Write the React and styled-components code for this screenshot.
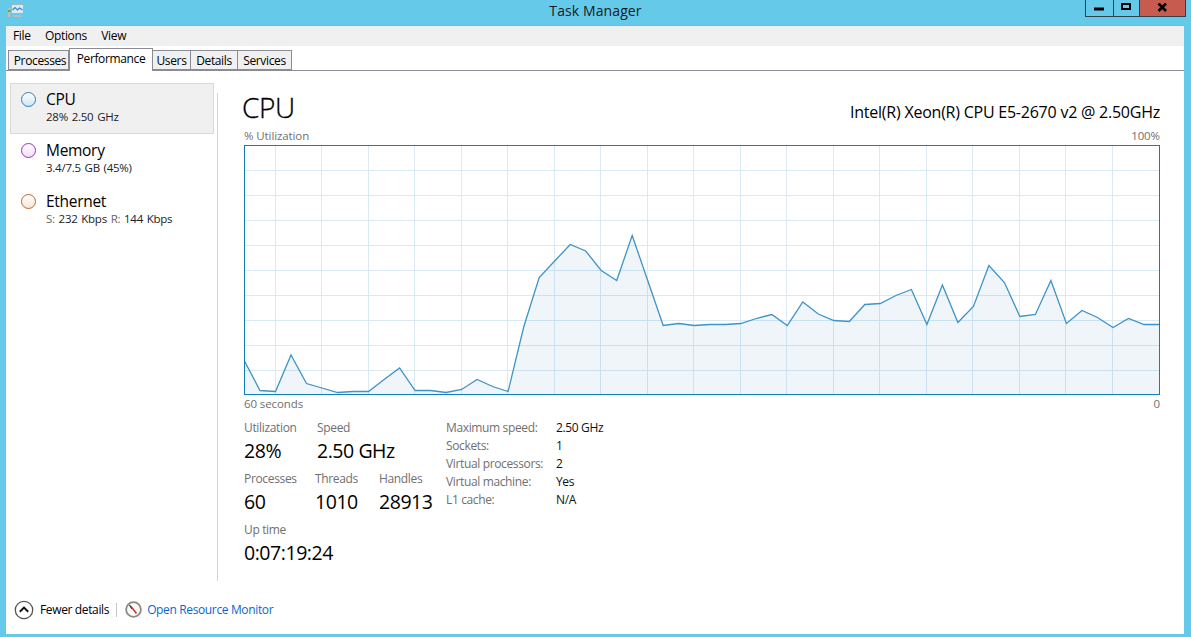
import React from "react";
import styled, { createGlobalStyle } from "styled-components";

const GlobalStyle = createGlobalStyle`
  html, body {
    margin: 0;
    padding: 0;
    background: #65c9ea;
  }
  body {
    font-family: "Open Sans", "Noto Sans", sans-serif;
    font-size: 12px;
    letter-spacing: -0.36px;
    color: #000;
  }
`;

const Frame = styled.div`
  width: 1191px;
  height: 637px;
  background: #65c9ea;
  display: flex;
  flex-direction: column;
  overflow: hidden;
`;

const TitleBar = styled.div`
  height: 25px;
  flex: none;
  display: grid;
  grid-template-columns: 1fr auto 1fr;
`;

const TitleIcon = styled.svg`
  width: 18px;
  height: 16px;
  margin: 2px 0 0 7px;
`;

const Title = styled.div`
  font-size: 14px;
  line-height: 22px;
  color: #1a1a1a;
  letter-spacing: 0.1px;
`;

const Controls = styled.div`
  justify-self: end;
  margin-right: 5px;
  height: 16px;
  display: flex;
  border: 1px solid #2f3f4c;
  border-top: none;
`;

const ControlButton = styled.div`
  box-sizing: border-box;
  width: ${(p) => p.$w}px;
  display: flex;
  align-items: center;
  justify-content: center;
  background: ${(p) => (p.$close ? "#c75b50" : "transparent")};
  border-left: ${(p) => (p.$first ? "none" : "1px solid #2f3f4c")};
`;

const WindowBody = styled.div`
  margin: 0 7px 0 6px;
  height: 608px;
  flex: none;
  background: #fff;
  border-top: 1px solid #7fb6cc;
  display: flex;
  flex-direction: column;
`;

const MenuBar = styled.div`
  height: 20px;
  flex: none;
  background: #f0f0f0;
  display: flex;
  align-items: center;
  padding-left: 7px;
  gap: 14.5px;
`;

const MenuItem = styled.span`
  line-height: 20px;
`;

const TabStrip = styled.div`
  height: 24px;
  flex: none;
  border-bottom: 1px solid #8b8b95;
  display: flex;
  align-items: flex-end;
  padding-left: 2px;
`;

const Tab = styled.div`
  box-sizing: border-box;
  width: ${(p) => p.$w}px;
  height: ${(p) => (p.$active ? 23 : 20)}px;
  margin-bottom: ${(p) => (p.$active ? -1 : 0)}px;
  padding-bottom: ${(p) => (p.$active ? 3 : 0)}px;
  padding-left: ${(p) => (p.$first ? 3 : 0)}px;
  background: ${(p) => (p.$active ? "#fff" : "#f0f0f0")};
  border: 1px solid #8b8b95;
  border-left: ${(p) => (p.$active || p.$first ? "1px solid #8b8b95" : "none")};
  border-bottom: ${(p) => (p.$active ? "none" : "1px solid #8b8b95")};
  display: flex;
  align-items: center;
  justify-content: center;
`;

const Content = styled.div`
  height: 519px;
  flex: none;
  display: flex;
`;

const Sidebar = styled.div`
  width: 204px;
  margin: 12px 0 0 4px;
  flex: none;
`;

const SideItem = styled.div`
  box-sizing: border-box;
  height: 51px;
  display: flex;
  padding: 6px 0 0 10px;
  background: ${(p) => (p.$selected ? "#f0f0f0" : "transparent")};
  border: 1px solid ${(p) => (p.$selected ? "#dadada" : "transparent")};
`;

const Ring = styled.span`
  box-sizing: border-box;
  width: 15px;
  height: 15px;
  margin-top: 2px;
  border-radius: 50%;
  border: 1.5px solid ${(p) => p.$color};
  background: linear-gradient(to bottom, #fff, ${(p) => p.$tint});
  flex: none;
`;

const SideText = styled.div`
  margin-left: 10px;
`;

const SideName = styled.div`
  font-size: 15.5px;
  line-height: 18px;
  letter-spacing: -0.3px;
`;

const SideSub = styled.div`
  font-size: 11.5px;
  line-height: 16px;
  margin-top: 1px;
  color: #222;
  letter-spacing: -0.25px;
  word-spacing: 1px;
`;

const Muted = styled.span`
  color: #666;
`;

const Divider = styled.div`
  width: 1px;
  height: 488px;
  margin: 22px 0 0 3px;
  flex: none;
  background: #d4d4d4;
`;

const Main = styled.div`
  width: 916px;
  margin-left: 26px;
  flex: none;
`;

const Header = styled.div`
  height: 54px;
  display: flex;
  justify-content: space-between;
  align-items: flex-start;
`;

const Heading = styled.div`
  font-size: 28px;
  font-weight: 300;
  line-height: 36px;
  margin: 18px 0 0 -2px;
  color: #000;
  -webkit-text-stroke: 0.3px #000;
`;

const Model = styled.div`
  font-size: 16px;
  line-height: 20px;
  margin-top: 31px;
  letter-spacing: -0.23px;
`;

const AxisRow = styled.div`
  height: ${(p) => p.$h}px;
  display: flex;
  justify-content: space-between;
  align-items: center;
  font-size: 11.5px;
  letter-spacing: -0.1px;
  color: #707070;
`;

const Chart = styled.svg`
  display: block;
  width: 916px;
  height: 250px;
`;

const Stats = styled.div`
  display: flex;
  margin-top: 8px;
`;

const StatsLeft = styled.div`
  width: 202px;
  flex: none;
`;

const StatRow = styled.div`
  height: 51px;
  display: flex;
`;

const Stat = styled.div`
  width: ${(p) => p.$w}px;
  flex: none;
`;

const StatLabel = styled.div`
  font-size: 12px;
  line-height: 18px;
  letter-spacing: -0.34px;
  color: #707070;
`;

const StatValue = styled.div`
  font-size: 19.5px;
  line-height: 27px;
  letter-spacing: -0.45px;
`;

const Specs = styled.div`
  display: grid;
  grid-template-columns: 110px auto;
  grid-auto-rows: 18px;
  align-content: start;
  line-height: 18px;
`;

const SpecKey = styled.div`
  color: #707070;
`;

const SpecValue = styled.div`
  color: #111;
`;

const Footer = styled.div`
  flex: 1;
  display: flex;
  align-items: center;
  padding: 0 0 5px 8px;
`;

const ArrowIcon = styled.svg`
  width: 20px;
  height: 20px;
  flex: none;
`;

const FooterLabel = styled.span`
  margin-left: 6px;
`;

const FooterSep = styled.span`
  width: 1px;
  height: 14px;
  margin: 0 8px 0 7px;
  background: #c8c8c8;
`;

const MonitorIcon = styled.svg`
  width: 17px;
  height: 17px;
  margin-bottom: 1px;
  flex: none;
`;

const FooterLink = styled.a`
  margin-left: 5px;
  color: #0a66d0;
`;

const tabs = [
  { label: "Processes", w: 61 },
  { label: "Performance", w: 84, active: true },
  { label: "Users", w: 38 },
  { label: "Details", w: 47 },
  { label: "Services", w: 54 },
];

const graphY = [
  216, 245.5, 246.5, 210, 238.5, 243, 247.5, 246.5, 246.5, 234.5, 223, 245.5, 245.5, 247.5,
  244.5, 234.5, 241.5, 246.5, 182, 132.5, 116, 99.5, 106, 125.5, 135.5, 90.5, 135.5, 180.5,
  178.5, 180.5, 179.5, 179.5, 178.5, 173.5, 169.5, 180.5, 157, 169, 175.5, 176.5, 159.5,
  158.5, 150.5, 144.5, 179.5, 140, 177.5, 161.5, 120.5, 137.5, 171.5, 169.5, 135.5, 178.5,
  165.5, 172.5, 182.5, 173.5, 179.5, 179.5,
];
const STEP = 915 / 59;
const linePoints = graphY.map((y, i) => `${(0.5 + i * STEP).toFixed(1)},${y}`).join(" ");
const hLines = [25, 50, 75, 100, 125, 150, 175, 200, 225];
const vLines = [31, 77.5, 124, 170.5, 217, 263.5, 310, 356.5, 403, 449.5, 496, 542.5, 589, 635.5, 682, 728.5, 775, 821.5, 868];

function CpuChart() {
  return (
    <Chart viewBox="0 0 916 250">
      {hLines.map((y) => (
        <line key={y} x1="0" x2="916" y1={y + 0.5} y2={y + 0.5} stroke="#d9eaf4" />
      ))}
      {vLines.map((x) => (
        <line key={x} x1={Math.floor(x) + 0.5} x2={Math.floor(x) + 0.5} y1="0" y2="250" stroke="#d9eaf4" />
      ))}
      <polygon points={`0.5,249 ${linePoints} 915.5,249`} fill="#4a86b8" fillOpacity="0.085" />
      <polyline points={linePoints} fill="none" stroke="#3f93c6" strokeWidth="1.3" />
      <rect x="0.5" y="0.5" width="915" height="249" fill="none" stroke="#117dbb" />
    </Chart>
  );
}

function App() {
  return (
    <>
      <GlobalStyle />
      <Frame>
        <TitleBar>
          <TitleIcon viewBox="0 0 18 16">
            <rect x="4.5" y="2.5" width="12" height="9" fill="#d6e9f7" stroke="#a9b2b8" />
            <path d="M5.5 8l2.5-2.5 2.5 2.5 2-2 3 2" fill="none" stroke="#3a86c8" strokeWidth="1.2" />
            <rect x="1" y="6" width="2.5" height="9" fill="#b8c0b0" />
            <rect x="1" y="8" width="2.5" height="2" fill="#5ea84e" />
            <rect x="6" y="13" width="9" height="2" fill="#b4bcc2" />
          </TitleIcon>
          <Title>Task Manager</Title>
          <Controls>
            <ControlButton $w={27} $first>
              <svg width="11" height="11" viewBox="0 0 11 11">
                <rect x="0" y="4.5" width="10" height="3" fill="#000" />
              </svg>
            </ControlButton>
            <ControlButton $w={26}>
              <svg width="11" height="10" viewBox="0 0 11 10">
                <rect x="1" y="1" width="8" height="5" fill="none" stroke="#000" strokeWidth="2" />
              </svg>
            </ControlButton>
            <ControlButton $w={46} $close>
              <svg width="11" height="10" viewBox="0 0 11 10">
                <path d="M1.5 0.5L9 8M9 0.5L1.5 8" stroke="#000" strokeWidth="2.6" />
              </svg>
            </ControlButton>
          </Controls>
        </TitleBar>
        <WindowBody>
          <MenuBar>
            <MenuItem>File</MenuItem>
            <MenuItem>Options</MenuItem>
            <MenuItem>View</MenuItem>
          </MenuBar>
          <TabStrip>
            {tabs.map((t, i) => (
              <Tab key={t.label} $w={t.w} $active={t.active} $first={i === 0}>
                {t.label}
              </Tab>
            ))}
          </TabStrip>
          <Content>
            <Sidebar>
              <SideItem $selected>
                <Ring $color="#2a80b9" $tint="#cfe5f5" />
                <SideText>
                  <SideName>CPU</SideName>
                  <SideSub>28% 2.50 GHz</SideSub>
                </SideText>
              </SideItem>
              <SideItem>
                <Ring $color="#9b30c0" $tint="#f0def6" />
                <SideText>
                  <SideName>Memory</SideName>
                  <SideSub>3.4/7.5 GB (45%)</SideSub>
                </SideText>
              </SideItem>
              <SideItem>
                <Ring $color="#b8682a" $tint="#f7e6d6" />
                <SideText>
                  <SideName>Ethernet</SideName>
                  <SideSub>
                    <Muted>S:</Muted> 232 Kbps <Muted>R:</Muted> 144 Kbps
                  </SideSub>
                </SideText>
              </SideItem>
            </Sidebar>
            <Divider />
            <Main>
              <Header>
                <Heading>CPU</Heading>
                <Model>Intel(R) Xeon(R) CPU E5-2670 v2 @ 2.50GHz</Model>
              </Header>
              <AxisRow $h={20}>
                <span>% Utilization</span>
                <span>100%</span>
              </AxisRow>
              <CpuChart />
              <AxisRow $h={16}>
                <span>60 seconds</span>
                <span>0</span>
              </AxisRow>
              <Stats>
                <StatsLeft>
                  <StatRow>
                    <Stat $w={73}>
                      <StatLabel>Utilization</StatLabel>
                      <StatValue>28%</StatValue>
                    </Stat>
                    <Stat $w={110}>
                      <StatLabel>Speed</StatLabel>
                      <StatValue>2.50 GHz</StatValue>
                    </Stat>
                  </StatRow>
                  <StatRow>
                    <Stat $w={71}>
                      <StatLabel>Processes</StatLabel>
                      <StatValue>60</StatValue>
                    </Stat>
                    <Stat $w={64}>
                      <StatLabel>Threads</StatLabel>
                      <StatValue>1010</StatValue>
                    </Stat>
                    <Stat $w={60}>
                      <StatLabel>Handles</StatLabel>
                      <StatValue>28913</StatValue>
                    </Stat>
                  </StatRow>
                  <StatRow>
                    <Stat $w={120}>
                      <StatLabel>Up time</StatLabel>
                      <StatValue>0:07:19:24</StatValue>
                    </Stat>
                  </StatRow>
                </StatsLeft>
                <Specs>
                  <SpecKey>Maximum speed:</SpecKey>
                  <SpecValue>2.50 GHz</SpecValue>
                  <SpecKey>Sockets:</SpecKey>
                  <SpecValue>1</SpecValue>
                  <SpecKey>Virtual processors:</SpecKey>
                  <SpecValue>2</SpecValue>
                  <SpecKey>Virtual machine:</SpecKey>
                  <SpecValue>Yes</SpecValue>
                  <SpecKey>L1 cache:</SpecKey>
                  <SpecValue>N/A</SpecValue>
                </Specs>
              </Stats>
            </Main>
          </Content>
          <Footer>
            <ArrowIcon viewBox="0 0 20 20">
              <circle cx="10" cy="10" r="8.7" fill="#fff" stroke="#555" strokeWidth="1.3" />
              <path d="M5.8 11.8L10 7.6l4.2 4.2" fill="none" stroke="#111" strokeWidth="2" />
            </ArrowIcon>
            <FooterLabel>Fewer details</FooterLabel>
            <FooterSep />
            <MonitorIcon viewBox="0 0 17 17">
              <circle cx="8.5" cy="8.5" r="7.4" fill="#fbfaf8" stroke="#8f8a80" strokeWidth="1.8" />
              <path d="M4.5 4l2.5 4" stroke="#222" strokeWidth="1.2" />
              <path d="M6 5.5l5.5 7" stroke="#d0342a" strokeWidth="1.6" />
            </MonitorIcon>
            <FooterLink>Open Resource Monitor</FooterLink>
          </Footer>
        </WindowBody>
      </Frame>
    </>
  );
}

export default App;
